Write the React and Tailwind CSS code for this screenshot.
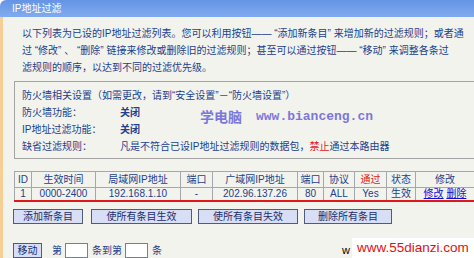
const FONT = { fontFamily: '"Liberation Sans", "Noto Sans CJK SC", sans-serif' }

const cols = [
  { w: 'w-[17px]', h: 'ID' },
  { w: 'w-[64px]', h: '生效时间' },
  { w: 'w-[85px]', h: '局域网IP地址' },
  { w: 'w-[32px]', h: '端口' },
  { w: 'w-[85px]', h: '广域网IP地址' },
  { w: 'w-[26px]', h: '端口' },
  { w: 'w-[31px]', h: '协议' },
  { w: 'w-[32px]', h: '通过', red: true },
  { w: 'w-[29px]', h: '状态' },
  { w: 'w-[59px]', h: '修改' },
]

const row = ['1', '0000-2400', '192.168.1.10', '-', '202.96.137.26', '80', 'ALL', 'Yes', '生效']

function Btn({ children, className = '' }) {
  return (
    <div
      className={`h-[15px] flex items-center justify-center bg-[#d7def6] border border-[#4f5b78] text-[10px] text-[#1a2f6a] ${className}`}
    >
      {children}
    </div>
  )
}

export default function App() {
  return (
    <div className="relative w-[474px] h-[258px] overflow-hidden bg-white" style={FONT}>
      <div className="h-[17px] rounded-tl-[6px] bg-gradient-to-b from-[#6494e4] to-[#82abef] pl-[12px] text-[10px] leading-[17px] text-white">
        IP地址过滤
      </div>

      <div className="h-[241px] border-l-[3px] border-[#f6cf96] bg-[#f3f3ee] text-[#213f8c] text-[10px]">
        <div className="pt-[8px] pl-[19px] leading-[17px] whitespace-nowrap">
          <div>以下列表为已设的IP地址过滤列表。您可以利用按钮—— “添加新条目” 来增加新的过滤规则；或者通</div>
          <div>过 “修改” 、 “删除” 链接来修改或删除旧的过滤规则；甚至可以通过按钮—— “移动” 来调整各条过</div>
          <div>滤规则的顺序，以达到不同的过滤优先级。</div>
        </div>

        <div className="mt-[5px] ml-[11px] border-t border-l border-b border-[#a4a4a4] pt-[5px] pb-[3px] pl-[7px] leading-[17px] whitespace-nowrap">
          <div>防火墙相关设置（如需更改，请到“安全设置”－“防火墙设置”）</div>
          <div className="flex">
            <span className="w-[98px]">防火墙功能：</span>
            <span className="font-bold">关闭</span>
          </div>
          <div className="flex">
            <span className="w-[98px]">IP地址过滤功能：</span>
            <span className="font-bold">关闭</span>
          </div>
          <div className="flex">
            <span className="w-[98px]">缺省过滤规则：</span>
            <span>
              凡是不符合已设IP地址过滤规则的数据包，<span className="text-[#e01818]">禁止</span>通过本路由器
            </span>
          </div>
        </div>

        <table className="mt-[12px] ml-[11px] w-[460px] border-collapse table-fixed border-b-2 border-b-[#e01818]">
          <thead>
            <tr className="h-[16px]">
              {cols.map((c, i) => (
                <th
                  key={i}
                  className={`${c.w} p-0 border border-[#a3a7ae] font-normal text-center leading-[14px] ${c.red ? 'text-[#e01818]' : ''}`}
                >
                  {c.h}
                </th>
              ))}
            </tr>
          </thead>
          <tbody>
            <tr className="h-[13px]">
              {row.map((v, i) => (
                <td key={i} className="p-0 border border-[#a3a7ae] text-center leading-[12px]">
                  {v}
                </td>
              ))}
              <td className="p-0 border border-[#a3a7ae] text-center leading-[12px]">
                <span className="underline text-[#1010d0]">修改</span>{' '}
                <span className="underline text-[#1010d0]">删除</span>
              </td>
            </tr>
          </tbody>
        </table>

        <div className="mt-[7px] ml-[10px] flex gap-[7px]">
          <Btn className="w-[70px]">添加新条目</Btn>
          <Btn className="w-[101px] ml-[1px]">使所有条目生效</Btn>
          <Btn className="w-[100px] ml-[-1px]">使所有条目失效</Btn>
          <Btn className="w-[88px] ml-[-1px]">删除所有条目</Btn>
        </div>

        <div className="mt-[19px] ml-[10px] flex items-center h-[15px]">
          <Btn className="w-[29px] h-[13px]">移动</Btn>
          <span className="ml-[10px]">第</span>
          <div className="ml-[3px] w-[23px] h-[15px] bg-white border border-[#7a7f88]" />
          <span className="ml-[4px]">条到第</span>
          <div className="ml-[3px] w-[23px] h-[15px] bg-white border border-[#7a7f88]" />
          <span className="ml-[4px]">条</span>
        </div>
      </div>

      <div className="absolute left-[200px] top-[106px] flex items-center gap-[14px] text-[#7b78da] font-bold">
        <span className="text-[14px]" style={{ fontFamily: '"Noto Sans CJK SC", serif' }}>学电脑</span>
        <span className="text-[13px]" style={{ fontFamily: '"Liberation Mono", monospace' }}>www.bianceng.cn</span>
      </div>

      <div className="absolute left-[342px] top-[242px] text-[11px] text-black">w</div>
      <div className="absolute left-[352px] top-[238px] w-[122px] h-[20px] bg-white flex items-center pl-[5px] text-[13.5px] text-[#e01010]">
        www.55dianzi.com
      </div>
    </div>
  )
}
